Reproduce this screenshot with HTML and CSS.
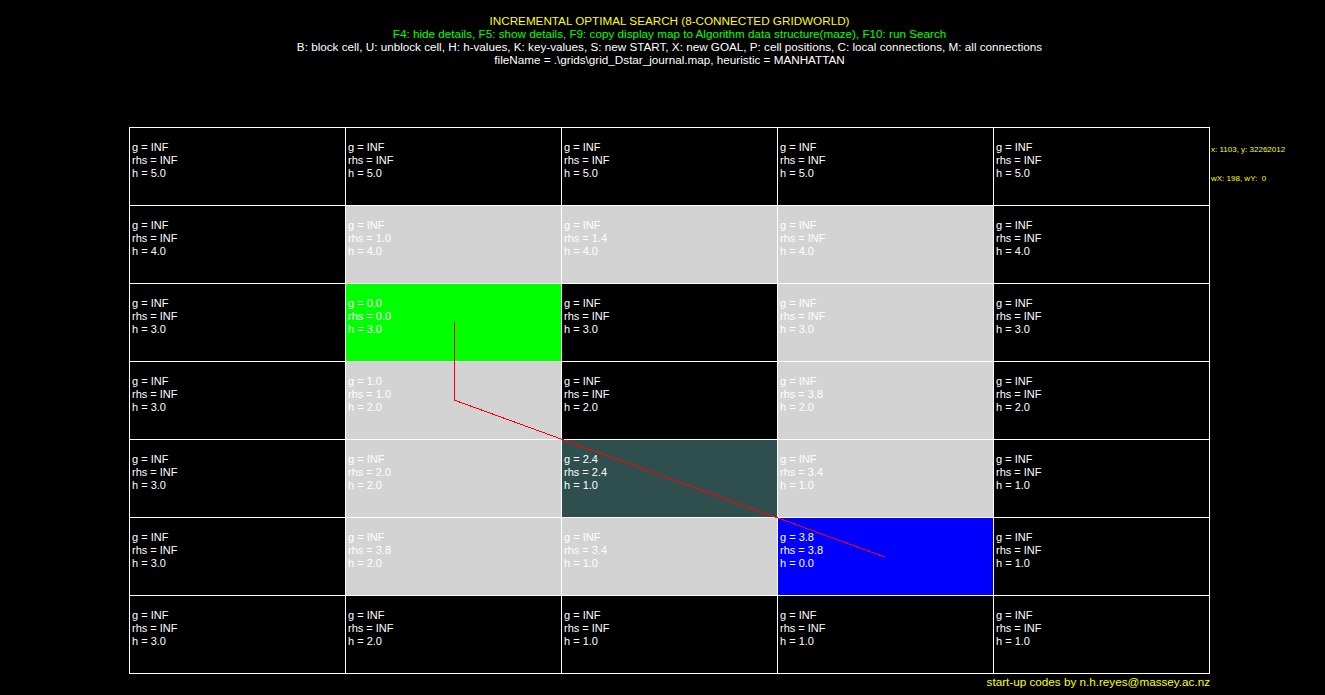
FILE: index.html
```html
<!DOCTYPE html>
<html>
<head>
<meta charset="utf-8">
<link rel="stylesheet" href="styles.css">
</head>
<body>
<div class="page">
  <header class="info">
    <div class="title">INCREMENTAL OPTIMAL SEARCH (8-CONNECTED GRIDWORLD)</div>
    <div class="keys">F4: hide details, F5: show details, F9: copy display map to Algorithm data structure(maze), F10: run Search</div>
    <div class="help">B: block cell, U: unblock cell, H: h-values, K: key-values, S: new START, X: new GOAL, P: cell positions, C: local connections, M: all connections</div>
    <div class="help">fileName = .\grids\grid_Dstar_journal.map, heuristic = MANHATTAN</div>
  </header>
  <div class="board-row">
    <div class="board">
      <div class="grid">
        <div class="cell"><span>g = INF</span><span>rhs = INF</span><span>h = 5.0</span></div>
        <div class="cell"><span>g = INF</span><span>rhs = INF</span><span>h = 5.0</span></div>
        <div class="cell"><span>g = INF</span><span>rhs = INF</span><span>h = 5.0</span></div>
        <div class="cell"><span>g = INF</span><span>rhs = INF</span><span>h = 5.0</span></div>
        <div class="cell"><span>g = INF</span><span>rhs = INF</span><span>h = 5.0</span></div>

        <div class="cell"><span>g = INF</span><span>rhs = INF</span><span>h = 4.0</span></div>
        <div class="cell gray"><span>g = INF</span><span>rhs = 1.0</span><span>h = 4.0</span></div>
        <div class="cell gray"><span>g = INF</span><span>rhs = 1.4</span><span>h = 4.0</span></div>
        <div class="cell gray"><span>g = INF</span><span>rhs = INF</span><span>h = 4.0</span></div>
        <div class="cell"><span>g = INF</span><span>rhs = INF</span><span>h = 4.0</span></div>

        <div class="cell"><span>g = INF</span><span>rhs = INF</span><span>h = 3.0</span></div>
        <div class="cell start"><span>g = 0.0</span><span>rhs = 0.0</span><span>h = 3.0</span></div>
        <div class="cell"><span>g = INF</span><span>rhs = INF</span><span>h = 3.0</span></div>
        <div class="cell gray"><span>g = INF</span><span>rhs = INF</span><span>h = 3.0</span></div>
        <div class="cell"><span>g = INF</span><span>rhs = INF</span><span>h = 3.0</span></div>

        <div class="cell"><span>g = INF</span><span>rhs = INF</span><span>h = 3.0</span></div>
        <div class="cell gray"><span>g = 1.0</span><span>rhs = 1.0</span><span>h = 2.0</span></div>
        <div class="cell"><span>g = INF</span><span>rhs = INF</span><span>h = 2.0</span></div>
        <div class="cell gray"><span>g = INF</span><span>rhs = 3.8</span><span>h = 2.0</span></div>
        <div class="cell"><span>g = INF</span><span>rhs = INF</span><span>h = 2.0</span></div>

        <div class="cell"><span>g = INF</span><span>rhs = INF</span><span>h = 3.0</span></div>
        <div class="cell gray"><span>g = INF</span><span>rhs = 2.0</span><span>h = 2.0</span></div>
        <div class="cell path"><span>g = 2.4</span><span>rhs = 2.4</span><span>h = 1.0</span></div>
        <div class="cell gray"><span>g = INF</span><span>rhs = 3.4</span><span>h = 1.0</span></div>
        <div class="cell"><span>g = INF</span><span>rhs = INF</span><span>h = 1.0</span></div>

        <div class="cell"><span>g = INF</span><span>rhs = INF</span><span>h = 3.0</span></div>
        <div class="cell gray"><span>g = INF</span><span>rhs = 3.8</span><span>h = 2.0</span></div>
        <div class="cell gray"><span>g = INF</span><span>rhs = 3.4</span><span>h = 1.0</span></div>
        <div class="cell goal"><span>g = 3.8</span><span>rhs = 3.8</span><span>h = 0.0</span></div>
        <div class="cell"><span>g = INF</span><span>rhs = INF</span><span>h = 1.0</span></div>

        <div class="cell"><span>g = INF</span><span>rhs = INF</span><span>h = 3.0</span></div>
        <div class="cell"><span>g = INF</span><span>rhs = INF</span><span>h = 2.0</span></div>
        <div class="cell"><span>g = INF</span><span>rhs = INF</span><span>h = 1.0</span></div>
        <div class="cell"><span>g = INF</span><span>rhs = INF</span><span>h = 1.0</span></div>
        <div class="cell"><span>g = INF</span><span>rhs = INF</span><span>h = 1.0</span></div>
      </div>
      <svg class="route" width="1081" height="547" viewBox="0 0 1081 547">
        <polyline points="325,195 325,273 756,430" fill="none" stroke="#ff0000" stroke-width="1" shape-rendering="crispEdges"/>
      </svg>
    </div>
    <aside class="coords">
      <div class="coord-a">x: 1103, y: 32262012</div>
      <div class="coord-b">wX: 198, wY:&nbsp;&nbsp;0</div>
    </aside>
  </div>
  <footer class="credit">start-up codes by n.h.reyes@massey.ac.nz</footer>
</div>
</body>
</html>
```

FILE: styles.css
```css
html, body {
  margin: 0;
  padding: 0;
  background: #000;
}
body {
  font-family: "Liberation Sans", Arial, sans-serif;
  font-size: 11px;
  color: #fff;
  width: 1325px;
  height: 695px;
  overflow: hidden;
}
.page {
  padding: 14px 0 0 129px;
}
.info {
  width: 1081px;
  text-align: center;
  line-height: 13px;
  font-size: 11.7px;
  white-space: nowrap;
}
.title { color: #ffff00; }
.keys { color: #00ff00; }
.help { color: #fff; }
.board-row {
  display: flex;
  margin-top: 61px;
}
.board {
  position: relative;
  width: 1081px;
  height: 547px;
}
.grid {
  display: grid;
  grid-template-columns: repeat(5, 215px);
  grid-template-rows: repeat(7, 77px);
  gap: 1px;
  padding: 1px;
  background: #fff;
  width: 1079px;
  height: 545px;
}
.cell {
  background: #000;
  display: flex;
  flex-direction: column;
  padding: 13px 0 0 2px;
  line-height: 13px;
  color: #fff;
}
.cell.gray { background: #d3d3d3; }
.cell.start { background: #00ff00; }
.cell.path { background: #2f4f4f; }
.cell.goal { background: #0000ff; }
.route {
  position: absolute;
  left: 0;
  top: 0;
  pointer-events: none;
}
.coords {
  color: #ffff00;
  font-size: 8px;
  padding-top: 18px;
  padding-left: 1px;
  white-space: nowrap;
}
.coord-a { line-height: 10px; }
.coord-b { line-height: 10px; margin-top: 19px; }
.credit {
  width: 1081px;
  text-align: right;
  color: #ffff00;
  line-height: 14px;
  font-size: 11.7px;
  padding-top: 1px;
}
```
